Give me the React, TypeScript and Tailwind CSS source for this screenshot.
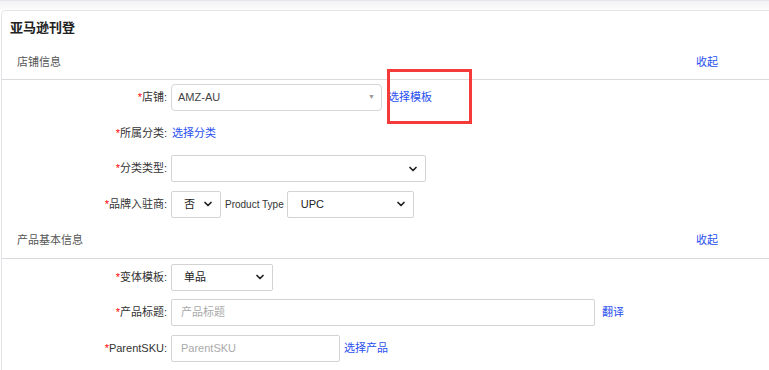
import React from 'react';
import { ChevronDown } from 'lucide-react';

const FONT = '[font-family:"Liberation_Sans","Noto_Sans_CJK_SC",sans-serif]';

interface RowProps {
  label: string;
  children: React.ReactNode;
}

const Row: React.FC<RowProps> = ({ label, children }) => (
  <div className="flex items-center h-[27px]">
    <div className="w-[169px] pr-[4px] text-right text-[11px] text-[#333] whitespace-nowrap">
      <span className="text-[#f00]">*</span>
      {label}:
    </div>
    <div className="flex items-center h-full">{children}</div>
  </div>
);

const Select: React.FC<{ value: string; w: string; pl?: string }> = ({ value, w, pl = 'pl-[12px]' }) => (
  <div className={`${w} h-full border border-[#d3d3d3] rounded-[2px] flex items-center justify-between ${pl} pr-[6px] text-[11px] text-[#222] bg-white`}>
    <span>{value}</span>
    <ChevronDown size={12} strokeWidth={3.5} className="text-[#222]" />
  </div>
);

const Link: React.FC<{ children: React.ReactNode; className?: string }> = ({ children, className = '' }) => (
  <span className={`text-[11px] text-[#2a4ff0] ${className}`}>{children}</span>
);

const SectionHeader: React.FC<{ title: string }> = ({ title }) => (
  <div className="h-[35px] flex items-center justify-between pl-[15px] pr-[51px] border-b border-[#d9d9de]">
    <span className="text-[11px] text-[#555]">{title}</span>
    <Link>收起</Link>
  </div>
);

export default function App() {
  return (
    <div className={`w-[769px] h-[370px] overflow-hidden bg-white relative ${FONT}`}>
      {/* top strip */}
      <div className="h-[10px] border-t border-[#e6e6ea] bg-gradient-to-b from-[#f3f3f5] to-[#fcfcfc]" />

      <div className="ml-px border-l border-t border-[#e4e4e8] rounded-tl-[5px]">
        <div className="h-[34px] flex items-center pl-[8px] text-[13px] font-bold text-[#222]">亚马逊刊登</div>

        <SectionHeader title="店铺信息" />
        <div className="flex flex-col gap-[8.5px] pt-[4px] pb-[6px]">
          <Row label="店铺">
            <div className="w-[211px] h-full border border-[#d6d6da] rounded-[4px] flex items-center justify-between pl-[6px] pr-[6px] text-[11px] text-[#444]">
              <span>AMZ-AU</span>
              <span className="text-[7px] text-[#999]">▼</span>
            </div>
            <Link className="ml-[6px]">选择模板</Link>
          </Row>
          <Row label="所属分类">
            <Link className="ml-[1px]">选择分类</Link>
          </Row>
          <Row label="分类类型">
            <Select value="" w="w-[255px]" />
          </Row>
          <Row label="品牌入驻商">
            <Select value="否" w="w-[50px]" />
            <span className="ml-[4px] mr-[3px] text-[10px] text-[#333]">Product Type</span>
            <Select value="UPC" w="w-[127px]" pl="pl-[13px]" />
          </Row>
        </div>

        <SectionHeader title="产品基本信息" />
        <div className="flex flex-col gap-[8.5px] pt-[5px]">
          <Row label="变体模板">
            <Select value="单品" w="w-[102px]" />
          </Row>
          <Row label="产品标题">
            <div className="w-[424px] h-full border border-[#d3d3d3] rounded-[2px] flex items-center pl-[9px] text-[11px] text-[#aaa]">产品标题</div>
            <Link className="ml-[7px]">翻译</Link>
          </Row>
          <Row label="ParentSKU">
            <div className="w-[169px] h-full border border-[#d3d3d3] rounded-[2px] flex items-center pl-[9px] text-[11px] text-[#aaa]">ParentSKU</div>
            <Link className="ml-[4px]">选择产品</Link>
          </Row>
          <div className="flex items-center h-[27px]">
            <div className="ml-[169px] w-[169px] h-full border border-[#d3d3d3] rounded-[2px]" />
          </div>
        </div>
      </div>

      {/* annotation box */}
      <div className="absolute left-[387px] top-[69px] w-[85px] h-[55px] border-[3px] border-[#f53a3a] pointer-events-none" />
    </div>
  );
}
